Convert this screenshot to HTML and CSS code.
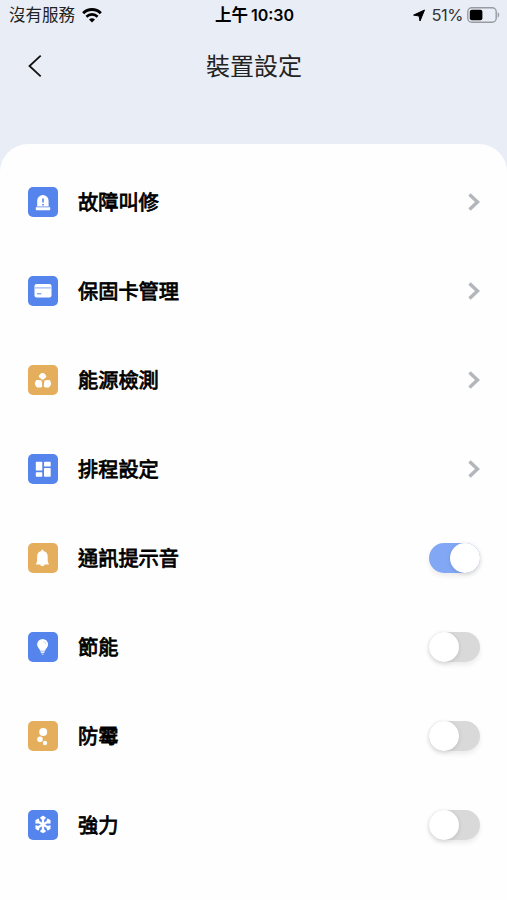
FILE: index.html
```html
<!DOCTYPE html>
<html lang="zh-Hant">
<head>
    <meta charset="UTF-8">
    <meta name="viewport" content="width=device-width, initial-scale=1.0">
    <title>裝置設定</title>
    <link rel="stylesheet" href="styles.css">
</head>
<body>

<div class="status-bar">
    <div class="carrier">
        <span>沒有服務</span>
        <svg class="wifi" width="20" height="15" viewBox="0 0 20 15">
            <path d="M1.2 5.2a12.6 12.6 0 0 1 17.6 0" fill="none" stroke="#000" stroke-width="3"/>
            <path d="M4.4 8.7a8 8 0 0 1 11.2 0" fill="none" stroke="#000" stroke-width="2.6"/>
            <path d="M10 14.6l-3-3a4.3 4.3 0 0 1 6 0z"/>
        </svg>
    </div>
    <div class="time"><span>上午</span><span class="clock">10:30</span></div>
    <div class="power">
        <svg width="12" height="13" viewBox="0 0 12 13">
            <path d="M11.5 1L7 12 6.1 7 .6 6.1z" stroke="#000" stroke-width="1" stroke-linejoin="round"/>
        </svg>
        <span class="percent">51%</span>
        <svg width="33" height="16" viewBox="0 0 33 16">
            <rect x=".8" y=".8" width="28.4" height="14.4" rx="4" fill="none" stroke="#999ba2" stroke-width="1.4"/>
            <rect x="2.8" y="2.8" width="12.6" height="10.4" rx="2"/>
            <path d="M30.7 5.3c2 .8 2 4.6 0 5.4z" fill="#999ba2"/>
        </svg>
    </div>
</div>

<div class="header">
    <svg class="back" width="14" height="24" viewBox="0 0 14 24">
        <path d="M12.7 1.6L1.5 12l11.2 10.4" fill="none" stroke="#111" stroke-width="1.8"/>
    </svg>
    <h1>裝置設定</h1>
</div>

<div class="sheet">
    <div class="row">
        <svg class="icon blue" viewBox="0 0 30 30">
            <path d="M9.2 19.8v-6a5.7 5.7 0 0 1 11.4 0v6z"/>
            <rect x="7.8" y="20" width="14.4" height="3.2" rx=".8"/>
            <path class="cut" d="M15 11.5v4M15 17v1.4"/>
            <path class="faint" d="M8.5 19.8h13"/>
        </svg>
        <span class="label">故障叫修</span>
        <svg class="arrow" viewBox="0 0 12 18"><path d="M1.5 1.5L9.5 9l-8 7.5"/></svg>
    </div>
    <div class="row">
        <svg class="icon blue" viewBox="0 0 30 30">
            <rect x="6.5" y="8" width="17" height="13.5" rx="2"/>
            <path class="faint" d="M7 11.9h16"/>
            <path class="cut thin" d="M9 17.8h4.3"/>
        </svg>
        <span class="label">保固卡管理</span>
        <svg class="arrow" viewBox="0 0 12 18"><path d="M1.5 1.5L9.5 9l-8 7.5"/></svg>
    </div>
    <div class="row">
        <svg class="icon orange" viewBox="0 0 30 30">
            <path d="M10.9 10.8l1.6-2q.6-.8 1.5-.8h1.1q.9 0 1.5.8l1.600 2q.6.9-.3 1.500l-2.300 2q-1 .8-2 0l-2.400-2q-.9-.7-.3-1.500z"/>
            <path d="M8.700 15l3.800.2q1 .1 1.200 1l.5 4.600q.1 1.400-1.200 1.600l-2.800.2q-1.200 0-1.800-.9l-1.200-1.700q-.5-1-.3-1.700l.9-2.500q.3-.7.900-.8z"/>
            <path d="M21.300 15l-3.800.2q-1 .1-1.200 1l-.5 4.600q-.1 1.400 1.200 1.600l2.800.2q1.200 0 1.800-.9l1.200-1.700q.5-1 .3-1.700l-.9-2.500q-.3-.7-.9-.8z"/>
        </svg>
        <span class="label">能源檢測</span>
        <svg class="arrow" viewBox="0 0 12 18"><path d="M1.5 1.5L9.5 9l-8 7.5"/></svg>
    </div>
    <div class="row">
        <svg class="icon blue" viewBox="0 0 30 30">
            <rect x="7.8" y="7.8" width="6.5" height="8.8" rx=".7"/>
            <rect x="16" y="7.8" width="6.7" height="4.7" rx=".7"/>
            <rect x="7.8" y="18.2" width="6.5" height="4.5" rx=".7"/>
            <rect x="16" y="14" width="6.7" height="8.7" rx=".7"/>
        </svg>
        <span class="label">排程設定</span>
        <svg class="arrow" viewBox="0 0 12 18"><path d="M1.5 1.5L9.5 9l-8 7.5"/></svg>
    </div>
    <div class="row">
        <svg class="icon orange" viewBox="0 0 30 30">
            <path d="M13.5 8v-.4q0-1 .9-1t.9 1v.4q4.4.8 4.400 5.700v4.300q0 1.200 1 2.500v.9H8.100v-.9q1-1.300 1-2.500v-4.300q0-4.900 4.400-5.700z"/>
            <path d="M12 21.200h4.800q-.4 2-2.400 2t-2.400-2z"/>
        </svg>
        <span class="label">通訊提示音</span>
        <div class="switch on"><div class="knob"></div></div>
    </div>
    <div class="row">
        <svg class="icon blue" viewBox="0 0 30 30">
            <path d="M12 18.7q-.2-1.4-1.5-2.6a5.5 5.5 0 1 1 8.2 0q-1.300 1.200-1.500 2.600z"/>
            <path d="M12.4 19.2h4.400l-.5 1.800h-3.400z" opacity=".85"/>
            <path d="M13.300 21.500h2.600q-.3 1.500-1.300 1.500t-1.300-1.500z" opacity=".6"/>
            <path d="M15.500 9.800q2.300.3 2.500 2.700" fill="none" stroke="#c3d2f8" stroke-width=".8"/>
        </svg>
        <span class="label">節能</span>
        <div class="switch"><div class="knob"></div></div>
    </div>
    <div class="row">
        <svg class="icon orange" viewBox="0 0 30 30">
            <circle cx="15.2" cy="11" r="4"/>
            <circle cx="12" cy="18.3" r="2.8"/>
            <circle cx="17" cy="22" r="2.2"/>
        </svg>
        <span class="label">防霉</span>
        <div class="switch"><div class="knob"></div></div>
    </div>
    <div class="row">
        <svg class="icon blue" viewBox="0 0 30 30">
            <g id="arm" class="arm">
                <path d="M15 14.5V7M13.4 7.8L15 9.2l1.6-1.4"/>
            </g>
            <use href="#arm" transform="rotate(60 15 14.5)"/>
            <use href="#arm" transform="rotate(120 15 14.5)"/>
            <use href="#arm" transform="rotate(180 15 14.5)"/>
            <use href="#arm" transform="rotate(240 15 14.5)"/>
            <use href="#arm" transform="rotate(300 15 14.5)"/>
        </svg>
        <span class="label">強力</span>
        <div class="switch"><div class="knob"></div></div>
    </div>
</div>

</body>
</html>
```
FILE: styles.css
```css
* {
    box-sizing: border-box;
}

body {
    margin: 0;
    height: 900px;
    display: flex;
    flex-direction: column;
    overflow: hidden;
    background-color: #e9edf6;
    color: #000;
    font-family: Inter, "Noto Sans CJK TC", sans-serif;
}

.status-bar {
    display: grid;
    grid-template-columns: 1fr auto 1fr;
    align-items: center;
    height: 30px;
    padding: 0 7px 0 9px;
    font-size: 16.5px;
    line-height: 30px;
}

.carrier {
    display: flex;
    align-items: center;
    gap: 7px;
    color: #222;
}

.time {
    display: flex;
    gap: 3px;
    font-size: 16.5px;
    font-weight: 600;
}

.clock {
    font-size: 16px;
}

.power {
    display: flex;
    align-items: center;
    justify-content: flex-end;
}

.percent {
    margin: 0 4px 0 7px;
    font-size: 16.5px;
    letter-spacing: -0.5px;
    color: #333;
}

.header {
    display: grid;
    grid-template-columns: 1fr auto 1fr;
    align-items: center;
    height: 114px;
    padding: 0 27px 42px 28px;
}

h1 {
    margin: 0;
    padding-top: 2px;
    font-size: 24px;
    font-weight: 400;
    line-height: 36px;
    color: #222;
}

.sheet {
    flex: 1;
    padding: 13px 27px 0 28px;
    background-color: #fefefe;
    border-radius: 28px 28px 0 0;
}

.row {
    display: flex;
    align-items: center;
    height: 89px;
}

.icon {
    width: 30px;
    height: 30px;
    border-radius: 5px;
    fill: #fff;
}

.blue {
    background-color: #5584ec;
}

.orange {
    background-color: #e5ae5d;
}

.cut {
    fill: none;
    stroke: #5584ec;
    stroke-width: 1.6;
}

.thin {
    stroke-width: 1;
}

.faint {
    fill: none;
    stroke: #9db8f4;
    stroke-width: 1.2;
}

.arm {
    fill: none;
    stroke: #fff;
    stroke-width: 2.3;
    stroke-linecap: round;
}

.label {
    flex: 1;
    margin-left: 20px;
    padding-top: 2px;
    font-size: 20.2px;
    font-weight: 400;
    line-height: 30px;
    -webkit-text-stroke: 0.8px #000;
}

.arrow {
    width: 12px;
    height: 18px;
    fill: none;
    stroke: #b3b6bb;
    stroke-width: 3.5;
}

.switch {
    display: flex;
    width: 51px;
    height: 30px;
    border-radius: 15px;
    background-color: #d9d9d9;
    box-shadow: 0 3px 5px rgba(0, 0, 0, 0.08);
}

.switch.on {
    justify-content: flex-end;
    background-color: #82a8f5;
}

.knob {
    width: 30px;
    height: 30px;
    border-radius: 50%;
    background-color: #fff;
    box-shadow: 0 1px 4px rgba(0, 0, 0, 0.13);
}
```
